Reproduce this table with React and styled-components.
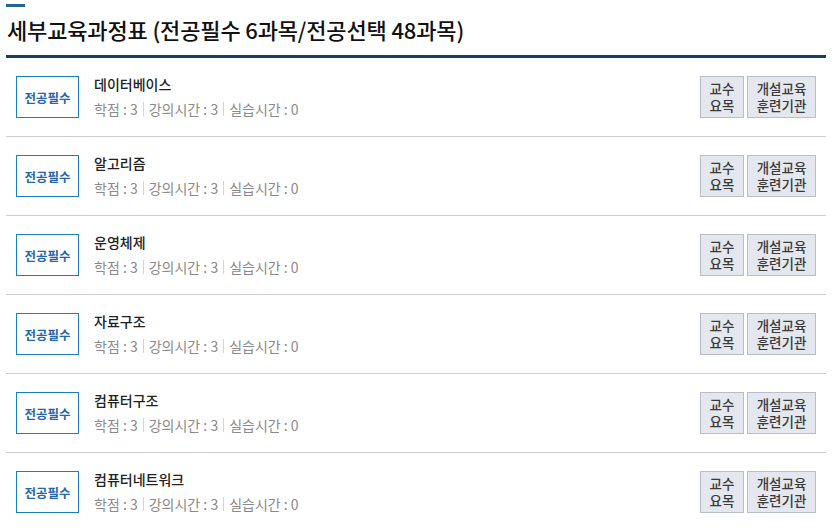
import React from 'react';
import styled, { createGlobalStyle } from 'styled-components';

const GlobalStyle = createGlobalStyle`
  html, body {
    margin: 0;
    padding: 0;
    background: #ffffff;
    font-family: "Noto Sans CJK KR", "Noto Sans", sans-serif;
  }
`;

const Wrap = styled.div`
  width: 820px;
  margin-left: 6px;
`;

const Accent = styled.div`
  width: 19px;
  height: 3px;
  margin-top: 4px;
  background: #1f6690;
`;

const Title = styled.h2`
  margin: 0;
  padding: 7px 0 0 1px;
  height: 51px;
  box-sizing: border-box;
  font-size: 22px;
  font-weight: 500;
  line-height: 30px;
  color: #111;
  letter-spacing: -0.15px;
  border-bottom: 3px solid #1b3a66;
`;

const List = styled.ul`
  list-style: none;
  margin: 0;
  padding: 0;
`;

const Row = styled.li`
  display: flex;
  align-items: center;
  height: 78px;
  padding: 0 10px;
  border-bottom: 1px solid #cfcfcf;
`;

const Badge = styled.span`
  display: flex;
  align-items: center;
  justify-content: center;
  width: 61px;
  height: 40px;
  border: 1px solid #1a7fc1;
  font-size: 12.5px;
  font-weight: 700;
  color: #2466ae;
  flex-shrink: 0;
`;

const Info = styled.div`
  flex: 1;
  margin-left: 15px;
  display: flex;
  flex-direction: column;
`;

const Name = styled.div`
  font-size: 14px;
  font-weight: 500;
  color: #222;
  line-height: 22px;
  margin-top: -2px;
`;

const Meta = styled.div`
  display: flex;
  align-items: center;
  font-size: 14px;
  color: #8a8a8a;
  line-height: 22px;
  margin-top: 3px;
  white-space: pre;
`;

const Sep = styled.span`
  display: inline-block;
  width: 1px;
  height: 14px;
  background: #d4d4d4;
  margin: 0 5px;
`;

const Actions = styled.div`
  display: flex;
  gap: 3px;
`;

const Btn = styled.button`
  width: ${(p) => p.$w}px;
  height: 42px;
  padding: 0;
  border: 1px solid #b9bdc6;
  background: #e4e7ee;
  color: #3a3a3a;
  font-family: inherit;
  font-size: 13.5px;
  font-weight: 500;
  line-height: 17px;
  cursor: pointer;
`;

const courses = ['데이터베이스', '알고리즘', '운영체제', '자료구조', '컴퓨터구조', '컴퓨터네트워크'];

export default function App() {
  return (
    <>
      <GlobalStyle />
      <Wrap>
        <Accent />
        <Title>세부교육과정표 (전공필수 6과목/전공선택 48과목)</Title>
        <List>
          {courses.map((c) => (
            <Row key={c}>
              <Badge>전공필수</Badge>
              <Info>
                <Name>{c}</Name>
                <Meta>
                  {'학점 : 3'}<Sep />{'강의시간 : 3'}<Sep />{'실습시간 : 0'}
                </Meta>
              </Info>
              <Actions>
                <Btn $w={44}>
                  교수
                  <br />
                  요목
                </Btn>
                <Btn $w={69}>
                  개설교육
                  <br />
                  훈련기관
                </Btn>
              </Actions>
            </Row>
          ))}
        </List>
      </Wrap>
    </>
  );
}
